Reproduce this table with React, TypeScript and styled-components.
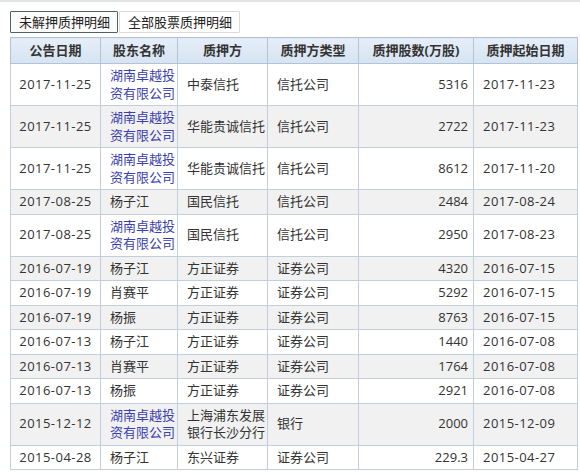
import React from "react";
import styled, { createGlobalStyle } from "styled-components";

const Global = createGlobalStyle`
  html, body { margin: 0; padding: 0; background: #fff; }
  body { font-family: "Open Sans", "Noto Sans CJK SC", sans-serif; color: #333; }
`;

const Page = styled.div`
  border-top: 2px solid #e4e4e4;
  padding: 9px 3px 0 10px;
`;

const Tabs = styled.div`
  display: flex;
  gap: 1px;
  margin-bottom: 4px;
`;

const Tab = styled.div<{ $active?: boolean }>`
  height: 20px;
  line-height: 20px;
  padding: 0 7px 0 8px;
  font-size: 13px;
  color: #222;
  background: ${(p) => (p.$active ? "#fbfbfb" : "#fff")};
  border: 1px solid ${(p) => (p.$active ? "#4f6262" : "#dadada")};
  border-radius: 1px;
`;

const Table = styled.table`
  border-collapse: collapse;
  table-layout: fixed;
  width: 567px;
  font-size: 13px;
  border: 1px solid #b3c2d6;
`;

const HeadCell = styled.th`
  font-weight: bold;
  color: #333;
  text-align: center;
  padding: 4px 0;
  line-height: 17px;
  background: linear-gradient(#e6eef8, #d6e3f2);
  border: 1px solid #b3c2d6;
`;

const Row = styled.tr<{ $striped?: boolean }>`
  background: ${(p) => (p.$striped ? "#f1f1f1" : "#fff")};
`;

const Cell = styled.td<{ $align?: "left" | "center" | "right"; $date?: boolean }>`
  text-align: ${(p) => p.$align ?? "left"};
  padding: 3px ${(p) => (p.$align === "right" ? "5px" : "4px")} 3px
    ${(p) => (p.$align === "left" ? "9px" : "4px")};
  line-height: 17.5px;
  letter-spacing: ${(p) => (p.$date ? "0.45px" : "normal")};
  vertical-align: middle;
  border: 1px solid #c3cedd;
  white-space: nowrap;
  overflow: hidden;
`;

const Line = styled.span`
  display: block;
`;

const Link = styled.span`
  color: #3a3fae;
`;

type Rec = {
  date: string;
  holder: string[];
  link?: boolean;
  pledgee: string[];
  kind: string;
  shares: string;
  start: string;
};

const HN = ["湖南卓越投", "资有限公司"];

const rows: Rec[] = [
  { date: "2017-11-25", holder: HN, link: true, pledgee: ["中泰信托"], kind: "信托公司", shares: "5316", start: "2017-11-23" },
  { date: "2017-11-25", holder: HN, link: true, pledgee: ["华能贵诚信托"], kind: "信托公司", shares: "2722", start: "2017-11-23" },
  { date: "2017-11-25", holder: HN, link: true, pledgee: ["华能贵诚信托"], kind: "信托公司", shares: "8612", start: "2017-11-20" },
  { date: "2017-08-25", holder: ["杨子江"], pledgee: ["国民信托"], kind: "信托公司", shares: "2484", start: "2017-08-24" },
  { date: "2017-08-25", holder: HN, link: true, pledgee: ["国民信托"], kind: "信托公司", shares: "2950", start: "2017-08-23" },
  { date: "2016-07-19", holder: ["杨子江"], pledgee: ["方正证券"], kind: "证券公司", shares: "4320", start: "2016-07-15" },
  { date: "2016-07-19", holder: ["肖赛平"], pledgee: ["方正证券"], kind: "证券公司", shares: "5292", start: "2016-07-15" },
  { date: "2016-07-19", holder: ["杨振"], pledgee: ["方正证券"], kind: "证券公司", shares: "8763", start: "2016-07-15" },
  { date: "2016-07-13", holder: ["杨子江"], pledgee: ["方正证券"], kind: "证券公司", shares: "1440", start: "2016-07-08" },
  { date: "2016-07-13", holder: ["肖赛平"], pledgee: ["方正证券"], kind: "证券公司", shares: "1764", start: "2016-07-08" },
  { date: "2016-07-13", holder: ["杨振"], pledgee: ["方正证券"], kind: "证券公司", shares: "2921", start: "2016-07-08" },
  { date: "2015-12-12", holder: HN, link: true, pledgee: ["上海浦东发展", "银行长沙分行"], kind: "银行", shares: "2000", start: "2015-12-09" },
  { date: "2015-04-28", holder: ["杨子江"], pledgee: ["东兴证券"], kind: "证券公司", shares: "229.3", start: "2015-04-27" },
];

const cols = [90, 77, 90, 91, 115, 104];
const heads = ["公告日期", "股东名称", "质押方", "质押方类型", "质押股数(万股)", "质押起始日期"];

export default function App() {
  return (
    <>
      <Global />
      <Page>
        <Tabs>
          <Tab $active>未解押质押明细</Tab>
          <Tab>全部股票质押明细</Tab>
        </Tabs>
        <Table>
          <colgroup>
            {cols.map((w, i) => (
              <col key={i} style={{ width: w }} />
            ))}
          </colgroup>
          <thead>
            <tr>
              {heads.map((h) => (
                <HeadCell key={h}>{h}</HeadCell>
              ))}
            </tr>
          </thead>
          <tbody>
            {rows.map((r, i) => (
              <Row key={i} $striped={i % 2 === 1}>
                <Cell $align="center" $date>{r.date}</Cell>
                <Cell $align="left">
                  {r.holder.map((l) =>
                    r.link ? (
                      <Line key={l}>
                        <Link>{l}</Link>
                      </Line>
                    ) : (
                      <Line key={l}>{l}</Line>
                    )
                  )}
                </Cell>
                <Cell $align="left">
                  {r.pledgee.map((l) => (
                    <Line key={l}>{l}</Line>
                  ))}
                </Cell>
                <Cell $align="left">{r.kind}</Cell>
                <Cell $align="right">{r.shares}</Cell>
                <Cell $align="left" $date>{r.start}</Cell>
              </Row>
            ))}
          </tbody>
        </Table>
      </Page>
    </>
  );
}
